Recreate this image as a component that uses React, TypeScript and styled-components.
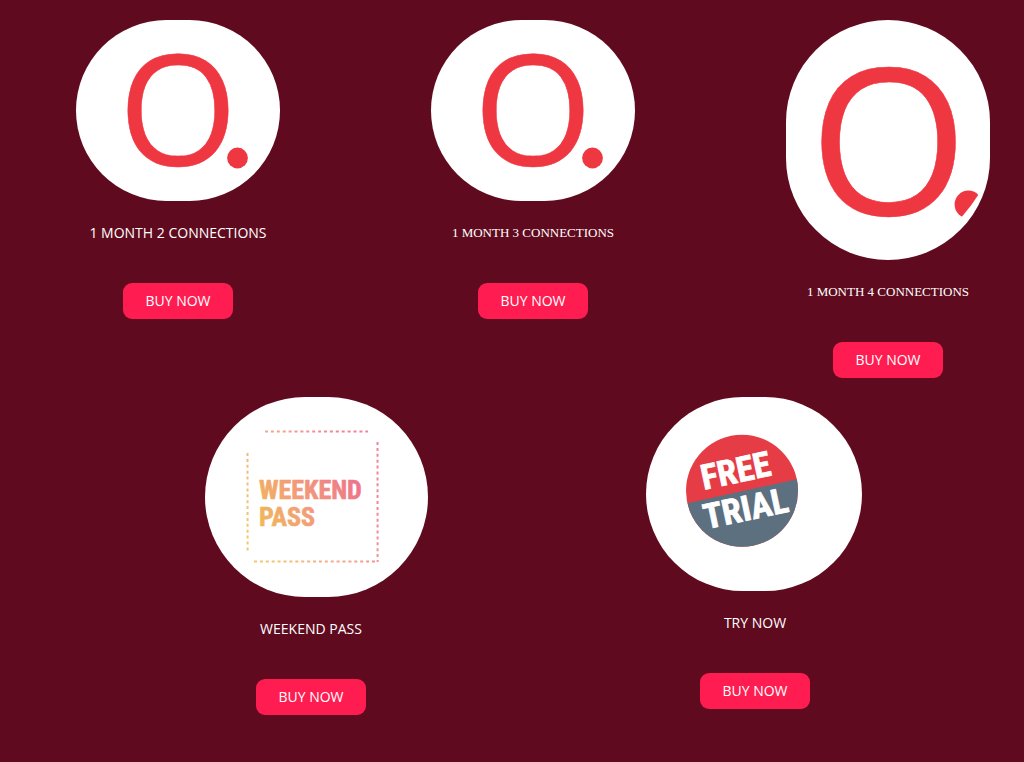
import React from "react";
import styled, { createGlobalStyle } from "styled-components";

const GlobalStyle = createGlobalStyle`
  * { box-sizing: border-box; }
  body {
    margin: 0;
    background: #5f0a1e;
    font-family: "Open Sans", sans-serif;
  }
`;

const Page = styled.main`
  min-height: 100vh;
  padding: 20px 0 47px;
`;

const MonthlyRow = styled.section`
  display: flex;
  align-items: flex-start;
  justify-content: space-between;
  padding: 0 34px 0 76px;
`;

const PassRow = styled.section`
  display: grid;
  grid-template-columns: 1fr 1fr;
  align-items: start;
  margin-top: 19px;
  padding: 0 47px 0 89px;
`;

const Card = styled.article`
  display: flex;
  flex-direction: column;
  align-items: center;
`;

const Art = styled.svg`
  display: block;
  overflow: visible;
  font-family: "Open Sans", sans-serif;
`;

const Wordmark = styled.text`
  font-family: "Liberation Sans Narrow", "Roboto Condensed", "Liberation Sans", sans-serif;
  font-weight: 700;
`;

const Caption = styled.h2<{ $serif?: boolean }>`
  margin: 22px 0 40px;
  color: #fff;
  font-family: ${(p) => (p.$serif ? '"Liberation Serif", serif' : '"Open Sans", sans-serif')};
  font-size: ${(p) => (p.$serif ? 13 : 14)}px;
  font-weight: 400;
  line-height: 20px;
  text-align: center;
  white-space: nowrap;
`;

const BuyButton = styled.button`
  width: 110px;
  height: 36px;
  padding: 0;
  border: 0;
  border-radius: 9px;
  background: #ff1c51;
  color: #fff;
  font-family: inherit;
  font-size: 14px;
  line-height: 20px;
  cursor: pointer;
`;

const LogoArt = () => (
  <Art width="204" height="181" viewBox="0 0 204 181" role="img" aria-label="O. logo">
    <rect width="204" height="181" rx="90.5" fill="#fff" />
    <text x="102" y="146" fontSize="153" textAnchor="middle" fill="#ef3742" stroke="#ef3742" strokeWidth="0.5">O</text>
    <circle cx="161.5" cy="138" r="10.4" fill="#ef3742" />
  </Art>
);

const LargeLogoArt = () => (
  <Art width="204" height="240" viewBox="0 0 204 240" role="img" aria-label="O. logo">
    <clipPath id="dot-edge">
      <path d="M150 150H208L192.5 174.5Q186 185 176.5 196L160 212H150Z" />
    </clipPath>
    <rect width="204" height="240" rx="102" fill="#fff" />
    <text x="102.5" y="195" fontSize="204" textAnchor="middle" fill="#ef3742" stroke="#ef3742" strokeWidth="0.5">O</text>
    <circle cx="182.4" cy="184.4" r="13.8" fill="#ef3742" clipPath="url(#dot-edge)" />
  </Art>
);

const WeekendArt = () => (
  <Art width="234" height="200" viewBox="0 0 234 200" role="img" aria-label="Weekend pass">
    <defs>
      <linearGradient id="sunset" gradientUnits="userSpaceOnUse" x1="62" y1="140" x2="166" y2="80">
        <stop offset="0" stopColor="#f0bd55" />
        <stop offset="0.5" stopColor="#f29b7a" />
        <stop offset="1" stopColor="#ee718c" />
      </linearGradient>
    </defs>
    <rect x="11" width="223" height="200" rx="100" fill="#fff" />
    <g stroke="url(#sunset)" strokeWidth="2" strokeDasharray="3 2.9" fill="none" opacity="0.85">
      <path d="M71 34.6L174 34.5" />
      <path d="M183.5 45L183.6 165" />
      <path d="M53.5 56L53.6 155" />
      <path d="M60 164.6L184 164.5" />
    </g>
    <Wordmark fontSize="26" fill="url(#sunset)" stroke="url(#sunset)" strokeWidth="0.6">
      <tspan x="65" y="102">WEEKEND</tspan>
      <tspan x="65" y="129">PASS</tspan>
    </Wordmark>
  </Art>
);

const TrialArt = () => (
  <Art width="218" height="194" viewBox="0 0 218 194" role="img" aria-label="Free trial">
    <clipPath id="badge">
      <circle cx="96" cy="93.8" r="56" />
    </clipPath>
    <rect width="216" height="194" rx="97" fill="#fff" />
    <g clipPath="url(#badge)">
      <rect x="36" y="34" width="120" height="120" fill="#e63c46" />
      <path d="M36 107.3L156 81V154H36Z" fill="#5d7080" />
    </g>
    <g transform="rotate(-12 96 94)" fill="#fff" stroke="#fff" strokeWidth="0.8">
      <Wordmark x="94" y="85" fontSize="35" textAnchor="middle">FREE</Wordmark>
      <Wordmark x="96" y="124" fontSize="35" textAnchor="middle">TRIAL</Wordmark>
    </g>
  </Art>
);

interface Product {
  name: string;
  art: React.ReactNode;
  serif?: boolean;
}

const monthly: Product[] = [
  { name: "1 MONTH 2 CONNECTIONS", art: <LogoArt /> },
  { name: "1 MONTH 3 CONNECTIONS", art: <LogoArt />, serif: true },
  { name: "1 MONTH 4 CONNECTIONS", art: <LargeLogoArt />, serif: true },
];

const passes: Product[] = [
  { name: "WEEKEND PASS", art: <WeekendArt /> },
  { name: "TRY NOW", art: <TrialArt /> },
];

const ProductCard = ({ name, art, serif }: Product) => (
  <Card>
    {art}
    <Caption $serif={serif}>{name}</Caption>
    <BuyButton type="button">BUY NOW</BuyButton>
  </Card>
);

export default function App() {
  return (
    <>
      <GlobalStyle />
      <Page>
        <MonthlyRow>
          {monthly.map((p) => <ProductCard key={p.name} {...p} />)}
        </MonthlyRow>
        <PassRow>
          {passes.map((p) => <ProductCard key={p.name} {...p} />)}
        </PassRow>
      </Page>
    </>
  );
}
